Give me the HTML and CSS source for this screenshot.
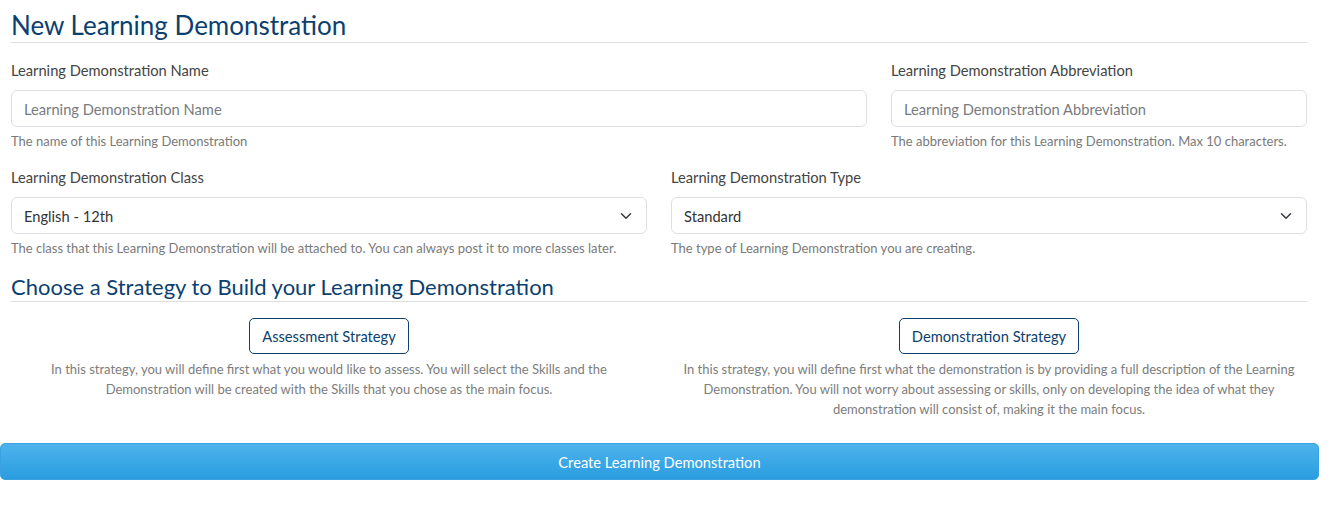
FILE: index.html
```html
<!DOCTYPE html>
<html lang="en">
<head>
    <meta charset="UTF-8">
    <title>New Learning Demonstration</title>
    <link rel="stylesheet" href="styles.css">
</head>
<body>

<div class="container">
    <h1 class="page-title">New Learning Demonstration</h1>

    <!-- Name / abbreviation -->
    <div class="row">
        <div class="col col-8">
            <label class="form-label">Learning Demonstration Name</label>
            <input class="form-control" type="text" placeholder="Learning Demonstration Name">
            <div class="form-text">The name of this Learning Demonstration</div>
        </div>
        <div class="col col-4">
            <label class="form-label">Learning Demonstration Abbreviation</label>
            <input class="form-control" type="text" placeholder="Learning Demonstration Abbreviation">
            <div class="form-text">The abbreviation for this Learning Demonstration. Max 10 characters.</div>
        </div>
    </div>

    <!-- Class / type -->
    <div class="row">
        <div class="col col-6">
            <label class="form-label">Learning Demonstration Class</label>
            <div class="form-select">
                <span>English - 12th</span>
                <svg width="12" height="12" viewBox="0 0 16 16"><path d="M2 5l6 6 6-6" fill="none" stroke="#343a40" stroke-width="2" stroke-linecap="round" stroke-linejoin="round"/></svg>
            </div>
            <div class="form-text">The class that this Learning Demonstration will be attached to. You can always post it to more classes later.</div>
        </div>
        <div class="col col-6">
            <label class="form-label">Learning Demonstration Type</label>
            <div class="form-select">
                <span>Standard</span>
                <svg width="12" height="12" viewBox="0 0 16 16"><path d="M2 5l6 6 6-6" fill="none" stroke="#343a40" stroke-width="2" stroke-linecap="round" stroke-linejoin="round"/></svg>
            </div>
            <div class="form-text">The type of Learning Demonstration you are creating.</div>
        </div>
    </div>

    <h2 class="section-title">Choose a Strategy to Build your Learning Demonstration</h2>

    <div class="row strategies">
        <div class="col col-6 strategy">
            <button class="btn-outline">Assessment Strategy</button>
            <p>In this strategy, you will define first what you would like to assess. You will select the Skills and the Demonstration will be created with the Skills that you chose as the main focus.</p>
        </div>
        <div class="col col-6 strategy">
            <button class="btn-outline">Demonstration Strategy</button>
            <p>In this strategy, you will define first what the demonstration is by providing a full description of the Learning Demonstration. You will not worry about assessing or skills, only on developing the idea of what they demonstration will consist of, making it the main focus.</p>
        </div>
    </div>

    <button class="btn-create">Create Learning Demonstration</button>
</div>

</body>
</html>
```

FILE: styles.css
```css
body {
    font-family: 'Lato', 'Open Sans', sans-serif;
    background-color: #ffffff;
    color: #444444;
    margin: 0;
    padding: 0;
}

.container {
    padding: 0 27px 0 11px;
}

.page-title {
    font-size: 26px;
    font-weight: 400;
    color: #0c3f6f;
    margin: 0;
    padding: 10px 0 1px;
    line-height: 31px;
    border-bottom: 1px solid #dedede;
}

.row {
    display: flex;
    margin: 0 -12px;
}

.row + .row {
    margin-top: 1px;
}

.col {
    padding: 0 12px;
    box-sizing: border-box;
}

.col-8 { width: 66.6667%; }
.col-4 { width: 33.3333%; }
.col-6 { width: 50%; }

.form-label {
    display: block;
    font-size: 14.7px;
    color: #444444;
    margin-top: 17px;
    height: 20px;
    line-height: 20px;
    margin-bottom: 10px;
}

.form-control,
.form-select {
    display: flex;
    align-items: center;
    justify-content: space-between;
    width: 100%;
    height: 37px;
    box-sizing: border-box;
    padding: 0 14px 0 12px;
    border: 1px solid #dcdfe3;
    border-radius: 6px;
    font-family: inherit;
    font-size: 14.7px;
    color: #333333;
    outline: none;
}

.form-control::placeholder {
    color: #777b80;
}

.form-text {
    font-size: 13px;
    color: #7a7a7a;
    margin-top: 6px;
    line-height: 16px;
}

.section-title {
    font-size: 22px;
    font-weight: 400;
    color: #0c3f6f;
    margin: 18px 0 0;
    line-height: 26px;
    padding-bottom: 1px;
    border-bottom: 1px solid #dedede;
}

.strategy {
    text-align: center;
    padding-top: 16px;
}

.btn-outline {
    background: #ffffff;
    border: 1px solid #0c3f6f;
    color: #0c3f6f;
    border-radius: 5px;
    font-family: inherit;
    font-size: 14.7px;
    height: 36px;
    padding: 0 12px;
}

.strategy p {
    font-size: 13px;
    color: #7d7d7d;
    line-height: 20px;
    margin: 5px 0 0;
    padding: 0 8px;
}

.btn-create {
    display: block;
    width: calc(100% + 23px);
    margin: 24px -12px 0 -11px;
    height: 37px;
    border: 1px solid #3aa2e0;
    border-radius: 5px;
    background: linear-gradient(#4db3ec, #2a9de0);
    color: #ffffff;
    font-family: inherit;
    font-size: 14.7px;
}
```
